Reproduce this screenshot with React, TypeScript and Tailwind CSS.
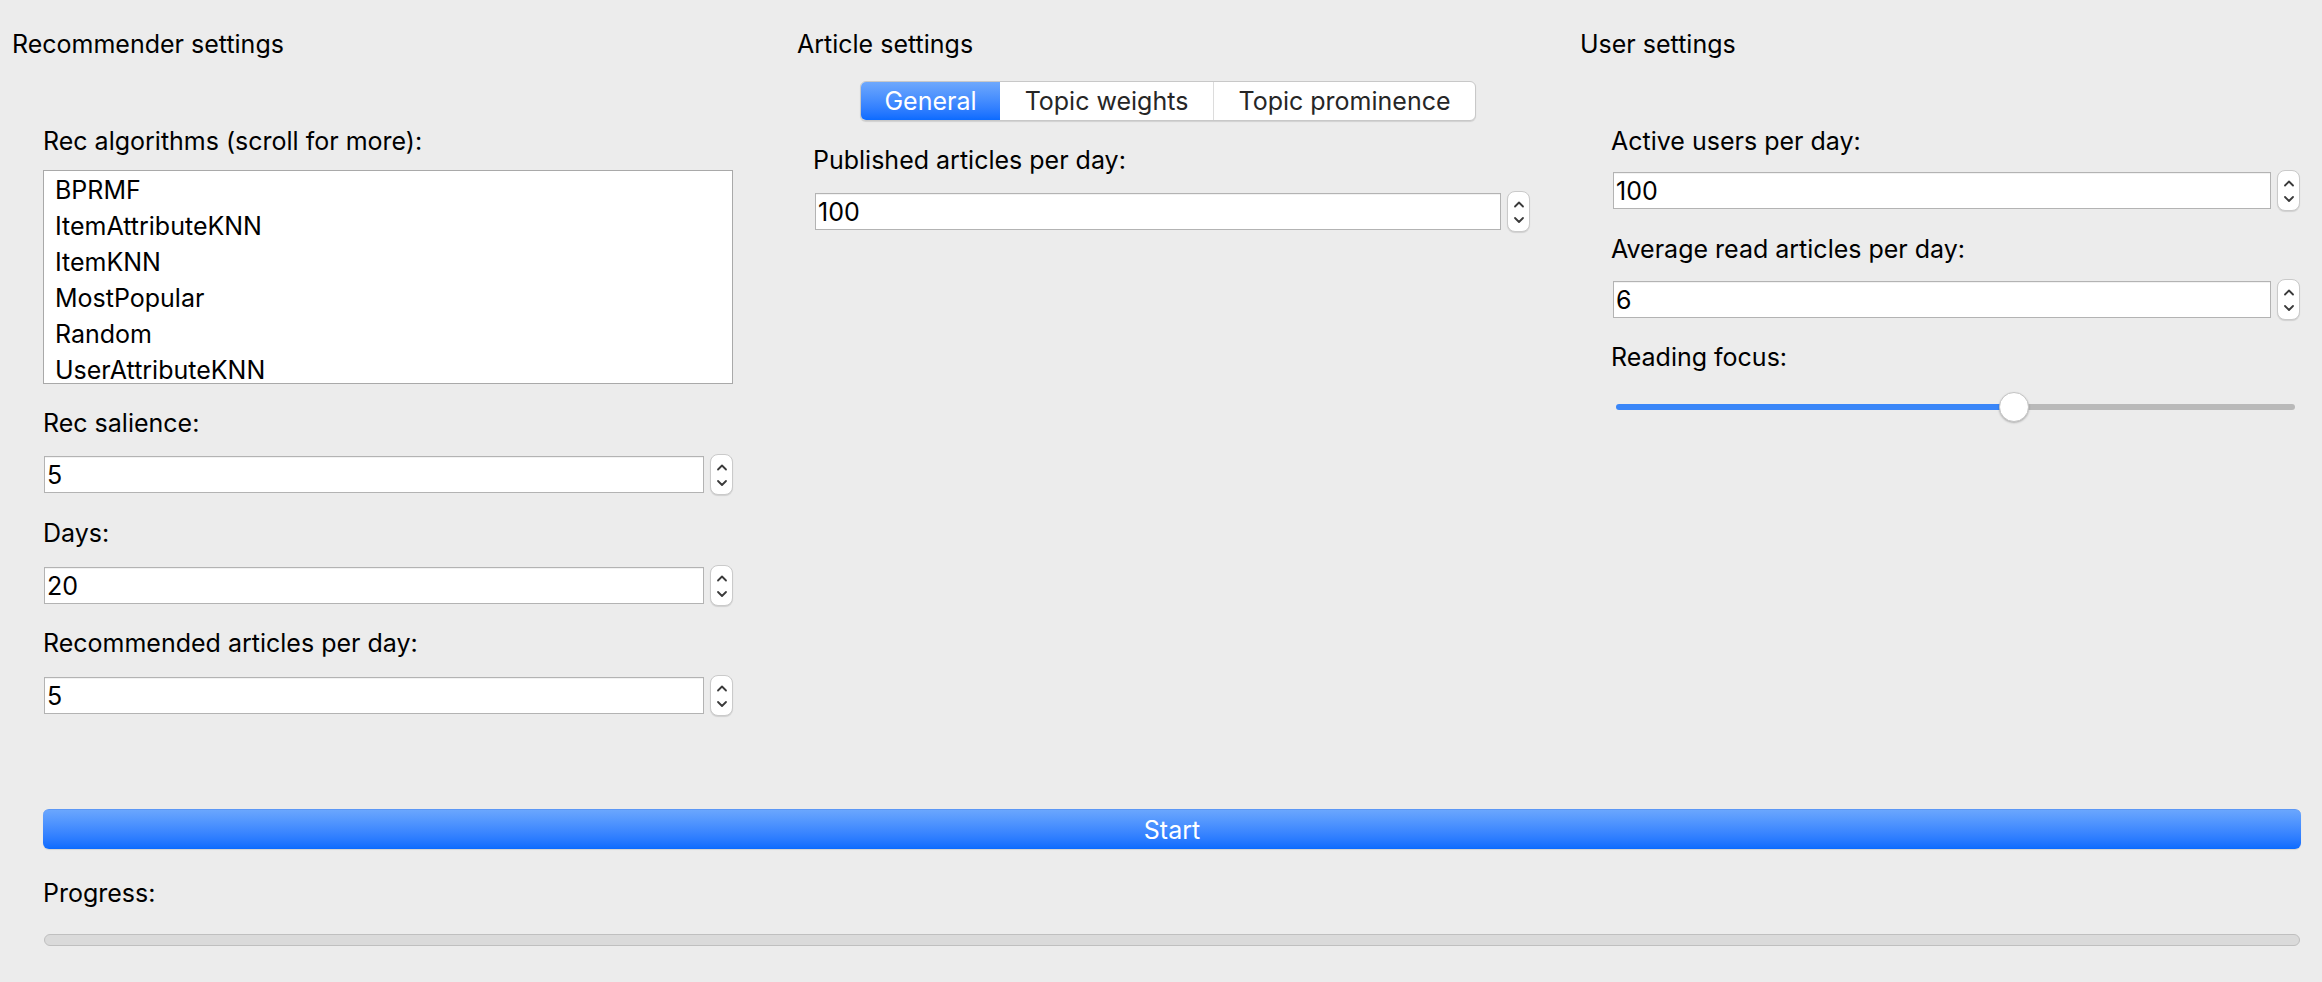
import React from 'react';

const algorithms = ['BPRMF', 'ItemAttributeKNN', 'ItemKNN', 'MostPopular', 'Random', 'UserAttributeKNN'];

function Stepper() {
  return (
    <div className="ml-[6px] flex h-[41px] w-[23px] shrink-0 items-center justify-center rounded-[8px] border border-[#cacaca] bg-white shadow-[0_1px_1px_rgba(0,0,0,0.12)]">
      <svg width="12" height="26" viewBox="0 0 12 26" fill="none" stroke="#3a3a3a" strokeWidth="1.8" strokeLinecap="round" strokeLinejoin="round">
        <path d="M2 7.5 L6 3.5 L10 7.5" />
        <path d="M2 19 L6 23 L10 19" />
      </svg>
    </div>
  );
}

function SpinBox({ value, className }: { value: string; className: string }) {
  return (
    <div className={`flex items-center ${className}`}>
      <div className="flex h-[37px] min-w-0 flex-1 items-center border border-[#b3b3b3] bg-white pl-[2px] shadow-[inset_0_1px_0_rgba(0,0,0,0.05)]">
        {value}
      </div>
      <Stepper />
    </div>
  );
}

export default function App() {
  return (
    <div className="h-screen w-full overflow-hidden bg-[#ececec] font-['Inter','Noto_Sans',sans-serif] text-[25px] leading-[30px] text-black">
      <div className="flex h-[809px] pl-[12px]">
        {/* Recommender settings */}
        <section className="w-[785px] pt-[29px]">
          <h2>Recommender settings</h2>
          <div className="w-[721px] pl-[31px]">
            <p className="mt-[67px]">Rec algorithms (scroll for more):</p>
            <div className="mt-[14px] h-[214px] overflow-hidden border border-[#a9a9a9] bg-white pt-[1px]">
              {algorithms.map((a) => (
                <div key={a} className="h-[36px] pl-[11px] leading-[36px]">
                  {a}
                </div>
              ))}
            </div>
            <p className="mt-[24px]">Rec salience:</p>
            <SpinBox className="ml-[1px] mt-[16px]" value="5" />
            <p className="mt-[23px]">Days:</p>
            <SpinBox className="ml-[1px] mt-[17px]" value="20" />
            <p className="mt-[22px]">Recommended articles per day:</p>
            <SpinBox className="ml-[1px] mt-[17px]" value="5" />
          </div>
        </section>

        {/* Article settings */}
        <section className="w-[783px] pt-[29px]">
          <h2>Article settings</h2>
          <div className="mt-[22px] flex pl-[63px]">
            <div className="flex h-[40px] overflow-hidden rounded-[6px] border border-[#c8c8c8] bg-white text-[#262626] shadow-[0_1px_1px_rgba(0,0,0,0.12)]">
              <div className="flex w-[139px] items-center justify-center bg-gradient-to-b from-[#6ea8fc] to-[#0a6bff] text-white">General</div>
              <div className="flex w-[214px] items-center justify-center border-r border-[#dcdcdc]">Topic weights</div>
              <div className="flex w-[261px] items-center justify-center">Topic prominence</div>
            </div>
          </div>
          <div className="w-[733px] pl-[16px]">
            <p className="mt-[24px]">Published articles per day:</p>
            <SpinBox className="ml-[2px] mt-[16px]" value="100" />
          </div>
        </section>

        {/* User settings */}
        <section className="flex-1 pt-[29px]">
          <h2>User settings</h2>
          <div className="w-[720px] pl-[31px]">
            <p className="mt-[67px]">Active users per day:</p>
            <SpinBox className="ml-[2px] mt-[14px]" value="100" />
            <p className="mt-[23px]">Average read articles per day:</p>
            <SpinBox className="ml-[2px] mt-[15px]" value="6" />
            <p className="mt-[22px]">Reading focus:</p>
            <div className="relative ml-[5px] mt-[20px] flex h-[30px] w-[679px] items-center">
              <div className="h-[6px] w-[58.6%] rounded-l-full bg-[#3a86f8]" />
              <div className="h-[6px] flex-1 rounded-r-full bg-[#b9b9b9]" />
              <div className="absolute left-[58.6%] top-0 h-[30px] w-[30px] -translate-x-1/2 rounded-full border border-[#c4c4c4] bg-white shadow-[0_1px_2px_rgba(0,0,0,0.25)]" />
            </div>
          </div>
        </section>
      </div>

      <div className="pl-[43px] pr-[21px]">
        <button className="flex h-[40px] w-full items-center justify-center rounded-[6px] border-t border-[#5c97f5] bg-gradient-to-b from-[#6aa6fd] to-[#0a6bff] text-white shadow-[0_1px_1px_rgba(0,0,0,0.1)]">
          Start
        </button>
        <p className="mt-[29px]">Progress:</p>
        <div className="ml-[1px] mt-[26px] h-[12px] w-[2256px] rounded-full border border-[#bfbfbf] bg-[#dadada]" />
      </div>
    </div>
  );
}
